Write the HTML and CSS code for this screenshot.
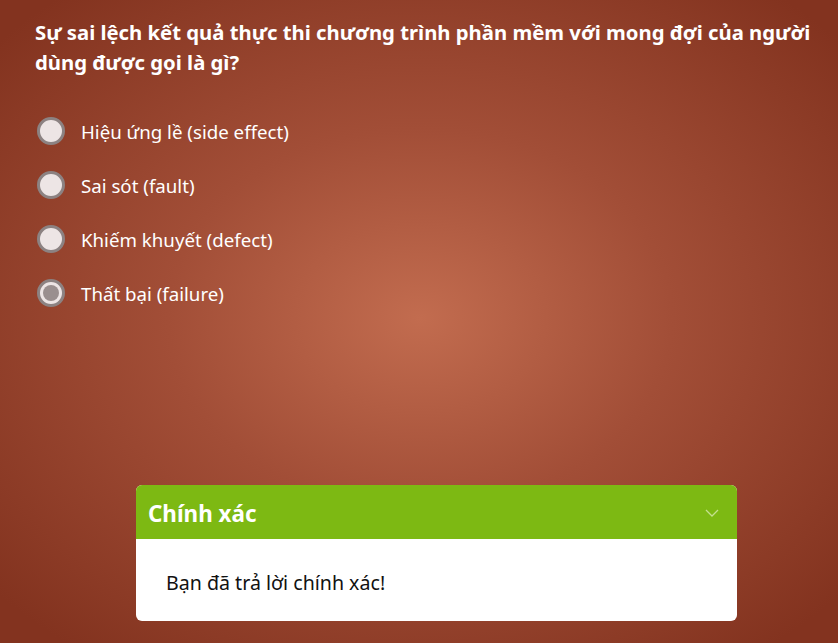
FILE: index.html
```html
<!DOCTYPE html>
<html lang="vi">
<head>
<meta charset="utf-8">
<link rel="stylesheet" href="styles.css">
</head>
<body>
<div class="page">
  <h1 class="question">Sự sai lệch kết quả thực thi chương trình phần mềm với mong đợi của người dùng được gọi là gì?</h1>
  <ul class="options">
    <li class="option"><span class="radio"></span><span class="label">Hiệu ứng lề (side effect)</span></li>
    <li class="option"><span class="radio"></span><span class="label">Sai sót (fault)</span></li>
    <li class="option"><span class="radio"></span><span class="label">Khiếm khuyết (defect)</span></li>
    <li class="option"><span class="radio checked"></span><span class="label">Thất bại (failure)</span></li>
  </ul>
  <div class="spacer"></div>
  <div class="card">
    <div class="card-head">
      <span class="card-title">Chính xác</span>
      <svg class="chev" width="14" height="8" viewBox="0 0 14 8"><path d="M1 1 L7 7 L13 1" fill="none" stroke="#c4e08e" stroke-width="1.3"/></svg>
    </div>
    <div class="card-body">Bạn đã trả lời chính xác!</div>
  </div>
</div>
</body>
</html>
```
FILE: styles.css
```css
html, body { margin: 0; padding: 0; height: 100%; }
body {
  font-family: "Noto Sans", "Open Sans", sans-serif;
  background: radial-gradient(ellipse 560px 420px at 420px 318px, #c26c4f 0%, #a24e37 45%, #83331f 100%);
  background-color: #83331f;
  color: #fff;
  overflow: hidden;
}
.page {
  height: 643px;
  box-sizing: border-box;
  padding: 17px 0 22px 35px;
  display: flex;
  flex-direction: column;
}
.question {
  margin: 0;
  font-size: 20.3px;
  font-weight: 700;
  line-height: 30px;
  width: 795px;
}
.options {
  list-style: none;
  margin: 40px 0 0 0;
  padding: 0;
  display: flex;
  flex-direction: column;
  gap: 26px;
}
.option {
  display: flex;
  align-items: center;
  height: 28px;
}
.radio {
  width: 22px;
  height: 22px;
  border-radius: 50%;
  border: 3px solid #8c8282;
  background: #ede5e5;
  box-sizing: content-box;
  margin-left: 2px;
  position: relative;
}
.radio.checked::after {
  content: "";
  position: absolute;
  left: 3px; top: 3px;
  width: 16px; height: 16px;
  border-radius: 50%;
  background: #9a8f8f;
}
.label {
  margin-left: 16px;
  font-size: 18.7px;
}
.spacer { flex: 1; }
.card {
  margin-left: 101px;
  width: 601px;
  border-radius: 6px;
  overflow: hidden;
  background: #fff;
}
.card-head {
  background: #7db913;
  height: 54px;
  display: flex;
  align-items: center;
  justify-content: space-between;
  padding: 2px 18px 0 12px;
  box-sizing: border-box;
}
.card-title {
  font-size: 22.4px;
  font-weight: 700;
  color: #fff;
}
.card-body {
  color: #111;
  font-size: 19.6px;
  padding: 30px 30px 24px 30px;
  line-height: 28px;
}
```
